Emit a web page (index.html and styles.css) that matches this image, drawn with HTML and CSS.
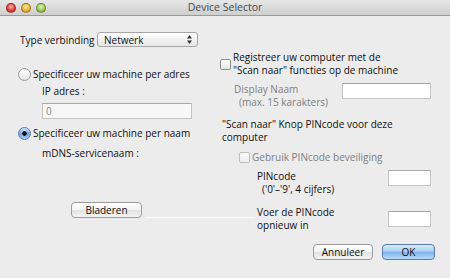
FILE: index.html
```html
<!DOCTYPE html>
<html lang="nl">
<head>
    <meta charset="UTF-8">
    <title>Device Selector</title>
    <link rel="stylesheet" href="styles.css">
</head>
<body>
    <div class="window">
        <div class="titlebar">
            <div class="lights">
                <span class="light red"></span>
                <span class="light yellow"></span>
                <span class="light green"></span>
            </div>
            <div class="title">Device Selector</div>
            <div></div>
        </div>

        <div class="content">
            <div class="cols">
                <!-- linker kolom: verbinding -->
                <div class="left">
                    <div class="type-row">
                        <span class="type-label">Type verbinding</span>
                        <div class="select">
                            <span>Netwerk</span>
                            <svg width="5" height="9" viewBox="0 0 5 9"><path d="M2.5 0L5 3.5H0Z M2.5 9L0 5.5H5Z" fill="#333"/></svg>
                        </div>
                    </div>

                    <div class="radio-row first">
                        <span class="radio"></span>
                        <span>Specificeer uw machine per adres</span>
                    </div>
                    <div class="sub-label">IP adres :</div>
                    <div class="field ip-field">0</div>

                    <div class="radio-row second">
                        <span class="radio on"></span>
                        <span>Specificeer uw machine per naam</span>
                    </div>
                    <div class="sub-label mdns">mDNS-servicenaam :</div>

                    <div class="browse-row">
                        <button class="btn browse">Bladeren</button>
                        <span class="rule"></span>
                    </div>
                </div>

                <!-- rechter kolom: Scan naar -->
                <div class="right">
                    <div class="check-row">
                        <span class="checkbox"></span>
                        <span class="check-text">Registreer uw computer met de<br>"Scan naar" functies op de machine</span>
                    </div>

                    <div class="display-row">
                        <div class="disabled display-label">Display Naam<br><span class="indent">(max. 15 karakters)</span></div>
                        <div class="field display-field"></div>
                    </div>

                    <div class="pin-title">"Scan naar" Knop PINcode voor deze<br>computer</div>

                    <div class="check-row pin-check">
                        <span class="checkbox dim"></span>
                        <span class="disabled">Gebruik PINcode beveiliging</span>
                    </div>

                    <div class="pin-row">
                        <div class="pin-label">PINcode<br><span class="indent">('0'–'9', 4 cijfers)</span></div>
                        <div class="field pin-field"></div>
                    </div>

                    <div class="pin-row again">
                        <div class="pin-label">Voer de PINcode<br>opnieuw in</div>
                        <div class="field pin-field"></div>
                    </div>
                </div>
            </div>

            <div class="actions">
                <button class="btn cancel">Annuleer</button>
                <button class="btn default">OK</button>
            </div>
        </div>
    </div>
</body>
</html>
```

FILE: styles.css
```css
body {
    margin: 0;
    font-family: "Open Sans", "Liberation Sans", sans-serif;
    font-size: 10px;
    color: #111;
    background-color: #ececec;
}

.window {
    width: 450px;
    height: 278px;
    background-color: #ececec;
    overflow: hidden;
}

/* Title bar */
.titlebar {
    display: grid;
    grid-template-columns: 1fr auto 1fr;
    align-items: center;
    height: 15px;
    background: linear-gradient(#e6e6e6, #cfcfcf);
    border-bottom: 1px solid #9a9a9a;
}

.lights {
    display: flex;
    gap: 5px;
    padding-left: 6px;
}

.light {
    width: 10px;
    height: 10px;
    border-radius: 50%;
    box-sizing: border-box;
    border: 1px solid rgba(0, 0, 0, 0.3);
}

.red {
    background: radial-gradient(circle at 50% 35%, #ffb0a8, #e23a2e 60%, #b02218);
}

.yellow {
    background: radial-gradient(circle at 50% 35%, #ffeaa0, #e5b02a 60%, #b48418);
}

.green {
    background: radial-gradient(circle at 50% 35%, #e2f5b0, #98c54c 60%, #6a9a2a);
}

.title {
    font-size: 10.5px;
    color: #4a4a4a;
    line-height: 15px;
}

/* Content */
.content {
    padding-top: 16px;
}

.cols {
    display: grid;
    grid-template-columns: 220px 1fr;
    align-items: start;
}

.left {
    padding-left: 18px;
}

.type-row {
    display: flex;
    align-items: center;
    height: 15px;
}

.type-label {
    width: 77px;
    padding-left: 2px;
}

.select {
    display: flex;
    align-items: center;
    justify-content: space-between;
    box-sizing: border-box;
    width: 101px;
    height: 15px;
    padding: 0 5px 0 6px;
    border: 1px solid #a6a6a6;
    border-radius: 3px;
    background: linear-gradient(#ffffff, #f1f1f1 50%, #e6e6e6);
}

.radio-row {
    display: flex;
    align-items: center;
    height: 13px;
    line-height: 13px;
}

.radio-row.first {
    margin-top: 21px;
}

.radio-row.second {
    margin-top: 8px;
}

.radio {
    box-sizing: border-box;
    width: 13px;
    height: 13px;
    margin-right: 2px;
    border-radius: 50%;
    border: 1px solid #9a9a9a;
    background: linear-gradient(#ffffff, #e4e4e4);
}

.radio.on {
    border-color: #5a7cb0;
    background: radial-gradient(circle, #111 0 2px, transparent 2.5px), linear-gradient(#d2e6fa, #6fa6e2 55%, #a8d0f5);
}

.sub-label {
    margin: 4px 0 0 24px;
    line-height: 12px;
}

.sub-label.mdns {
    margin-top: 7px;
}

.field {
    box-sizing: border-box;
    height: 16px;
    border: 1px solid #c4c4c4;
    border-top-color: #a8a8a8;
    background-color: #fff;
}

.ip-field {
    width: 150px;
    margin: 6px 0 0 24px;
    padding-left: 3px;
    line-height: 14px;
    color: #888;
    background-color: #f7f7f7;
}

.browse-row {
    display: flex;
    align-items: flex-end;
    margin-top: 43px;
    margin-left: 53px;
    width: 300px;
}

.rule {
    width: 109px;
    height: 1px;
    margin-left: 4px;
    background-color: #fbfbfb;
}

.btn {
    box-sizing: border-box;
    height: 16px;
    padding: 0;
    font-family: inherit;
    font-size: 10px;
    color: #111;
    border: 1px solid #9c9c9c;
    border-radius: 4px;
    background: linear-gradient(#ffffff, #f3f3f3 50%, #e2e2e2 51%, #f4f4f4);
}

.browse {
    width: 71px;
}

/* Right column */
.right {
    margin-top: 19px;
}

.check-row {
    display: flex;
    align-items: center;
}

.checkbox {
    box-sizing: border-box;
    width: 11px;
    height: 11px;
    margin-right: 2px;
    border: 1px solid #8e8e8e;
    border-radius: 2px;
    background: linear-gradient(#ffffff, #e6e6e6);
}

.checkbox.dim {
    border-color: #bdbdbd;
    background: linear-gradient(#fafafa, #ededed);
}

.check-text {
    line-height: 13px;
}

.disabled {
    color: #7f7f7f;
}

.indent {
    padding-left: 5px;
}

.display-row {
    display: flex;
    align-items: flex-start;
    margin-top: 6px;
    padding-left: 14px;
}

.display-label {
    width: 108px;
    line-height: 13px;
}

.display-field {
    width: 89px;
}

.pin-title {
    margin: 9px 0 0 2px;
    line-height: 13px;
}

.pin-check {
    margin: 7px 0 0 19px;
    line-height: 12px;
}

.pin-row {
    display: flex;
    align-items: flex-start;
    margin-top: 7px;
    padding-left: 37px;
}

.pin-label {
    width: 131px;
    line-height: 13px;
}

.pin-row.again {
    align-items: center;
    margin-top: 10px;
}

.pin-field {
    width: 43px;
}

.actions {
    display: flex;
    justify-content: flex-end;
    gap: 9px;
    margin-top: 12px;
    padding-right: 15px;
}

.cancel {
    width: 60px;
}

.default {
    width: 53px;
    border-color: #5b7bb4;
    background: linear-gradient(#dcebfb, #a9cdf3 45%, #7fb3ea 52%, #b6dbfa);
}
```
